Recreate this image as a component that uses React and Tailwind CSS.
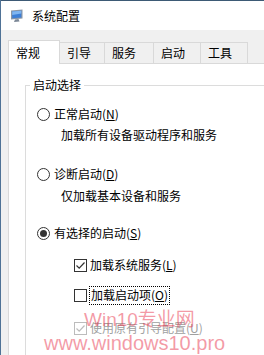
const font = { fontFamily: '"Noto Sans CJK SC", "Microsoft YaHei", sans-serif' };

const tabs = [
  { label: "常规", w: "w-[52px]", active: true },
  { label: "引导", w: "w-[45px]" },
  { label: "服务", w: "w-[49px]" },
  { label: "启动", w: "w-[47px]" },
  { label: "工具", w: "w-[47px]" },
];

const Radio = ({ checked }) => (
  <span className="w-[13px] h-[13px] rounded-full border border-[#333] bg-white flex items-center justify-center shrink-0">
    {checked && <span className="w-[7px] h-[7px] rounded-full bg-[#333]" />}
  </span>
);

const Check = ({ checked, disabled }) => (
  <span
    className={
      "w-[13px] h-[13px] border bg-white flex items-center justify-center shrink-0 " +
      (disabled ? "border-[#bcbcbc]" : "border-[#333]")
    }
  >
    {checked && (
      <svg width="11" height="11" viewBox="0 0 11 11">
        <polyline
          points="1.5,5.5 4.2,8.2 9.5,2.5"
          fill="none"
          stroke={disabled ? "#bcbcbc" : "#333"}
          strokeWidth="1.2"
        />
      </svg>
    )}
  </span>
);

const App = () => {
  return (
    <div
      className="relative w-[264px] h-[355px] overflow-hidden bg-[#f0f0f0] border-l border-[#4f7296] text-[12px] text-black leading-[16px]"
      style={font}
    >
      {/* title bar */}
      <div className="h-[30px] bg-white border-t border-[#3d5a75] flex items-center pl-[9px]">
        <svg width="14" height="14" viewBox="0 0 14 14" className="shrink-0">
          <path d="M1 1.5 L12.5 0.5 L12.5 9.5 L1 10.5 Z" fill="#8a96a6" />
          <path d="M2.2 2.5 L11.3 1.7 L11.3 8.5 L2.2 9.2 Z" fill="#3d7fd6" />
          <path d="M2.2 2.5 L11.3 1.7 L11.3 4.5 L2.2 6 Z" fill="#7fb5f0" />
          <path d="M5 10.4 L8.5 10.1 L9.5 12.5 L4 13 Z" fill="#7b8796" />
        </svg>
        <span className="ml-[8px]">系统配置</span>
      </div>

      {/* tabs */}
      <div className="pt-[10px] pl-[7px]">
        <div className="flex items-end h-[24px] relative z-10 -mb-[1px]">
          {tabs.map((t) => (
            <div
              key={t.label}
              className={
                t.w +
                " pl-[7px] flex items-center border-[#d9d9d9] " +
                (t.active
                  ? "h-[24px] bg-white border-t border-l border-r"
                  : "h-[21px] bg-[#f0f0f0] border-t border-r mb-[1px]")
              }
            >
              {t.label}
            </div>
          ))}
        </div>

        {/* panel */}
        <div className="bg-white border border-[#d9d9d9] w-[300px] h-[320px] pt-[21px] pl-[16px]">
          <div className="relative border border-[#dcdcdc] w-[300px] h-[300px] pl-[11px] pt-[18px]">
            <span className="absolute left-[4px] -top-[9px] bg-white px-[3px]">启动选择</span>

            <div className="h-[20px] flex items-center">
              <Radio />
              <span className="ml-[4px]">
                正常启动(<u>N</u>)
              </span>
            </div>
            <div className="h-[20px] flex items-center mt-[1px] pl-[24px]">加载所有设备驱动程序和服务</div>

            <div className="h-[20px] flex items-center mt-[19px]">
              <Radio />
              <span className="ml-[4px]">
                诊断启动(<u>D</u>)
              </span>
            </div>
            <div className="h-[20px] flex items-center mt-[2px] pl-[24px]">仅加载基本设备和服务</div>

            <div className="h-[20px] flex items-center mt-[17px]">
              <Radio checked />
              <span className="ml-[4px]">
                有选择的启动(<u>S</u>)
              </span>
            </div>

            <div className="h-[20px] flex items-center mt-[12px] pl-[37px]">
              <Check checked />
              <span className="ml-[3px]">
                加载系统服务(<u>L</u>)
              </span>
            </div>
            <div className="h-[20px] flex items-center mt-[10px] pl-[37px]">
              <Check />
              <span className="ml-[2px] px-[1px] h-[19px] flex items-center border border-dotted border-black">
                加载启动项(<u>O</u>)
              </span>
            </div>
            <div className="h-[20px] flex items-center mt-[13px] pl-[37px] text-[#a0a0a0]">
              <Check checked disabled />
              <span className="ml-[3px]">
                使用原有引导配置(<u>U</u>)
              </span>
            </div>
          </div>
        </div>
      </div>

      {/* watermark */}
      <div
        className="absolute left-[83px] top-[309px] text-[19px] leading-[22px] text-[#e8364d]/50 pointer-events-none"
        style={{ fontFamily: '"Liberation Sans", "Noto Sans CJK SC", sans-serif' }}
      >
        Win10专业网
      </div>
      <div
        className="absolute left-[43px] top-[332px] text-[20px] leading-[22px] text-[#e8364d]/50 pointer-events-none"
        style={{ fontFamily: '"Liberation Sans", sans-serif' }}
      >
        www.windows10.pro
      </div>
    </div>
  );
};

export default App;
